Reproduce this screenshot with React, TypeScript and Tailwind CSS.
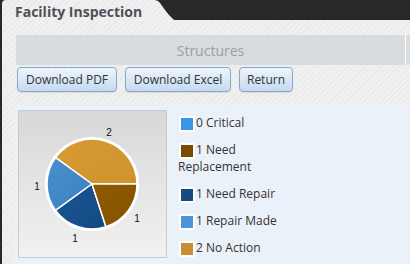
import React from "react"

const stripes =
  "bg-[image:repeating-linear-gradient(-45deg,#f0f0f0_0px,#f0f0f0_3px,#e8e8e8_3px,#e8e8e8_4px)]"

const legend = [
  { label: "0 Critical", color: "bg-[#3b95e8]" },
  { label: "1 Need Replacement", color: "bg-[#7b4c00]" },
  { label: "1 Need Repair", color: "bg-[#154b7f]" },
  { label: "1 Repair Made", color: "bg-[#4a95da]" },
  { label: "2 No Action", color: "bg-[#c98d34]" },
]

function Pie() {
  const cx = 73
  const cy = 73
  return (
    <svg width="147" height="146" viewBox="0 0 147 146">
      <defs>
        <linearGradient id="gOrange" x1="0" y1="0" x2="1" y2="1">
          <stop offset="0" stopColor="#d99a34" />
          <stop offset="1" stopColor="#cf922c" />
        </linearGradient>
        <linearGradient id="gLight" x1="0" y1="0" x2="1" y2="1">
          <stop offset="0" stopColor="#4a8fcd" />
          <stop offset="1" stopColor="#3a7fbf" />
        </linearGradient>
        <linearGradient id="gDark" x1="0" y1="0" x2="1" y2="1">
          <stop offset="0" stopColor="#1a5591" />
          <stop offset="1" stopColor="#134a84" />
        </linearGradient>
        <linearGradient id="gBrown" x1="0" y1="0" x2="1" y2="1">
          <stop offset="0" stopColor="#8e5a02" />
          <stop offset="1" stopColor="#855300" />
        </linearGradient>
      </defs>
      <circle cx={cx} cy={cy} r="46" fill="#fff" />
      <path d="M73,73 L118,73 A45,45 0 0 0 36.59,46.55 Z" fill="url(#gOrange)" stroke="#fff" strokeWidth="1.5" />
      <path d="M73,73 L36.59,46.55 A45,45 0 0 0 36.59,99.45 Z" fill="url(#gLight)" stroke="#fff" strokeWidth="1.5" />
      <path d="M73,73 L36.59,99.45 A45,45 0 0 0 86.91,115.8 Z" fill="url(#gDark)" stroke="#fff" strokeWidth="1.5" />
      <path d="M73,73 L86.91,115.8 A45,45 0 0 0 118,73 Z" fill="url(#gBrown)" stroke="#fff" strokeWidth="1.5" />
      <circle cx={cx} cy={cy} r="46" fill="none" stroke="#fff" strokeWidth="2" />
      <g fontFamily="'Liberation Sans', Arial, sans-serif" fontSize="10" fill="#111" textAnchor="middle" dominantBaseline="central">
        <text x="90" y="21">2</text>
        <text x="18" y="75">1</text>
        <text x="118" y="107">1</text>
        <text x="56" y="127">1</text>
      </g>
    </svg>
  )
}

export default function App() {
  return (
    <div className="w-[410px] h-[264px] overflow-hidden bg-[#282828] pl-[2px] font-['Open_Sans',sans-serif]">
      <div className="h-[20px] flex">
        <div
          className={`w-[172px] h-[20px] rounded-tl-[4px] pl-[13px] pt-[2px] ${stripes} [clip-path:polygon(0_0,153px_0,156px_1px,158px_3px,163px_10px,167px_15px,170px_18px,172px_20px,0_20px)]`}
        >
          <span className="block text-[14px] leading-[19px] font-bold text-[#4d5157] whitespace-nowrap">
            Facility Inspection
          </span>
        </div>
      </div>

      <div className={`h-[244px] pt-[15px] pl-[14px] ${stripes}`}>
        <div className="flex h-[30px]">
          <div className="w-[389px] bg-[#d8dcdf] flex items-center justify-center text-[14px] text-[#9a9ea3]">
            Structures
          </div>
          <div className="w-[1px] bg-white" />
          <div className="flex-1 bg-[#d8dcdf]" />
        </div>

        <div className="mt-[2px] pl-[1px] flex gap-[8px]">
          {[
            { text: "Download PDF", w: "w-[100px]" },
            { text: "Download Excel", w: "w-[106px]" },
            { text: "Return", w: "w-[54px]" },
          ].map((b) => (
            <button
              key={b.text}
              className={`${b.w} h-[25px] rounded-[4px] border border-[#86a7cb] bg-linear-to-b from-[#eef5fc] to-[#c4daf1] text-[12px] text-[#333] shadow-[0_1px_1px_rgba(0,0,0,0.08)] whitespace-nowrap`}
            >
              {b.text}
            </button>
          ))}
        </div>

        <div className="mt-[13px] -ml-[1px] h-[200px] bg-[#eaf1f8] pt-[5px] pl-[3px] flex items-start">
          <div className="w-[149px] h-[148px] border border-[#c8cacd] bg-linear-to-b from-[#d8d8d8] to-[#f1f1f1]">
            <Pie />
          </div>

          <div className="ml-[11px] mt-[4px] w-[120px] flex flex-col gap-[10px] text-[12px] leading-[17px] text-[#333]">
            {legend.map((l) => (
              <div key={l.label}>
                <span
                  className={`inline-block w-[16px] h-[16px] border-2 border-white align-middle -my-[2px] ml-[1px] mr-[1px] ${l.color}`}
                />
                {l.label}
              </div>
            ))}
          </div>
        </div>
      </div>
    </div>
  )
}
